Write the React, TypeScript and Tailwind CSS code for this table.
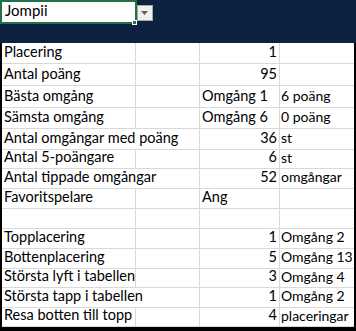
import React from "react";

type Row = {
  label: string;
  num?: string;
  text?: string;
  unit?: string;
  h: number;
  spill?: boolean;
};

const rows: Row[] = [
  { label: "Placering", num: "1", h: 21 },
  { label: "Antal poäng", num: "95", h: 22 },
  { label: "Bästa omgång", text: "Omgång 1", unit: "6 poäng", h: 22 },
  { label: "Sämsta omgång", text: "Omgång 6", unit: "0 poäng", h: 21 },
  { label: "Antal omgångar med poäng", num: "36", unit: "st", h: 21, spill: true },
  { label: "Antal 5-poängare", num: "6", unit: "st", h: 19 },
  { label: "Antal tippade omgångar", num: "52", unit: "omgångar", h: 20, spill: true },
  { label: "Favoritspelare", text: "Ang", h: 20 },
  { label: "", h: 20 },
  { label: "Topplacering", num: "1", unit: "Omgång 2", h: 20 },
  { label: "Bottenplacering", num: "5", unit: "Omgång 13", h: 20 },
  { label: "Största lyft i tabellen", num: "3", unit: "Omgång 4", h: 19 },
  { label: "Största tapp i tabellen", num: "1", unit: "Omgång 2", h: 20, spill: true },
  { label: "Resa botten till topp", num: "4", unit: "placeringar", h: 19 },
];

const font = { fontFamily: "Lato, 'Noto Sans', sans-serif" };

export default function App() {
  return (
    <div
      className="w-[356px] h-[331px] bg-black overflow-hidden text-[14.5px] leading-none text-black"
      style={font}
    >
      {/* header band with the player picker */}
      <div className="h-[43px] bg-[#0c2240] flex items-start">
        <div className="relative w-[137px] h-[24px] bg-white border-2 border-[#217346] flex items-end pl-[3px] pb-[4px] text-[15px]">
          <span>Jompii</span>
          <div className="absolute right-[-2px] bottom-[-3px] w-[5px] h-[5px] bg-[#217346] border border-white" />
        </div>
        <div className="mt-[5px] w-[16px] h-[16px] bg-[#f0f0f0] border border-[#a6a6a6] flex items-center justify-center">
          <svg width="8" height="5" viewBox="0 0 8 5">
            <path d="M0 0 H7 L3.5 4 Z" fill="#606060" />
          </svg>
        </div>
      </div>

      {/* sheet */}
      <div className="ml-[2px] w-[352px] bg-white flex flex-col">
        {rows.map((r, i) => (
          <div
            key={i}
            className="grid grid-cols-[134px_64px_80px_74px] border-b border-[#d9d9d9]"
            style={{ height: r.h }}
          >
            <div
              className={
                "relative z-10 whitespace-nowrap flex items-end pl-[2px] pb-[4px] border-r " +
                (r.spill ? "border-transparent" : "border-[#d9d9d9]")
              }
            >
              {r.label}
            </div>
            <div className="border-r border-[#d9d9d9]" />
            <div className="border-r border-[#d9d9d9] flex items-end pb-[4px] px-[2px] whitespace-nowrap">
              {r.num ? <span className="ml-auto">{r.num}</span> : <span>{r.text}</span>}
            </div>
            <div className="flex items-end pb-[4px] pl-[1px] whitespace-nowrap text-[14px]">{r.unit}</div>
          </div>
        ))}
      </div>
    </div>
  );
}
